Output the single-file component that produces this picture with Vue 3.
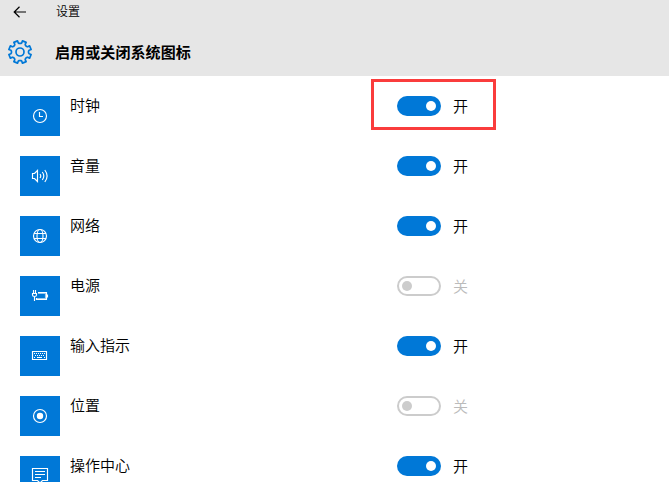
<script setup>
const rows = [
  { id: 'clock', label: '时钟', on: true, marked: true },
  { id: 'volume', label: '音量', on: true },
  { id: 'network', label: '网络', on: true },
  { id: 'power', label: '电源', on: false },
  { id: 'input', label: '输入指示', on: true },
  { id: 'location', label: '位置', on: false },
  { id: 'action', label: '操作中心', on: true },
]

const gearPath = (() => {
  const pts = []
  for (let i = 0; i < 8; i++) {
    const base = i * 45 + 22.5
    for (const [da, r] of [[-17, 8.6], [-12, 9.2], [-10, 11.4], [10, 11.4], [12, 9.2], [17, 8.6]]) {
      const a = ((base + da) * Math.PI) / 180
      pts.push(`${(12 + r * Math.cos(a)).toFixed(2)} ${(12 + r * Math.sin(a)).toFixed(2)}`)
    }
  }
  return `M${pts.join('L')}Z`
})()
</script>

<template>
  <div class="page">
    <header class="header">
      <div class="titlebar">
        <svg class="back" width="14" height="12" viewBox="0 0 14 12"><path d="M13 6H1.5M6.5 .8L1.2 6l5.3 5.2" /></svg>
        <span>设置</span>
      </div>
      <div class="heading">
        <svg class="gear" width="24" height="24" viewBox="0 0 24 24">
          <path :d="gearPath" /><circle cx="12" cy="12" r="4" />
        </svg>
        <h1>启用或关闭系统图标</h1>
      </div>
    </header>
    <main class="list">
      <div v-for="row in rows" :key="row.id" class="row">
        <div class="tile">
          <svg class="glyph" width="20" height="20" viewBox="0 0 20 20">
            <template v-if="row.id === 'clock'">
              <circle cx="10" cy="10" r="6.5" /><path d="M9.5 6v4.5H13" />
            </template>
            <template v-else-if="row.id === 'volume'">
              <path d="M2.5 7.5h2L7.5 4.5v11L4.5 12.5h-2zM10 8q1.5 2 0 4M12.3 6q3 4 0 8M14.8 4q4.6 6 0 12" />
            </template>
            <template v-else-if="row.id === 'network'">
              <circle cx="10" cy="10" r="6.5" /><ellipse cx="10" cy="10" rx="3" ry="6.5" /><path d="M4 7.5h12M4 12.5h12" />
            </template>
            <template v-else-if="row.id === 'power'">
              <path d="M8 6.5h8.5v7H6.5v-1.5M17.5 8.5v3M3.5 4v3M5.5 4v3M2 7.5h5M2.5 7.5v1.5q0 1.5 2 1.5t2-1.5V7.5M4.5 11v4" /><path class="inner" d="M8 7.5h7.5v5H7" />
            </template>
            <template v-else-if="row.id === 'input'">
              <path d="M2.5 5.5h14v8h-14z" /><path class="keys" d="M4 7.5h11M5 9.5h10" /><path d="M4 11.5h1M7 11.5h5M14 11.5h1" />
            </template>
            <template v-else-if="row.id === 'location'">
              <circle cx="10" cy="10" r="6.5" /><circle class="solid" cx="10" cy="10" r="3.2" />
            </template>
            <template v-else>
              <path d="M2.5 2.5h15v12h-5L10 17l-2.5-2.5h-5zM5 5.5h10M5 8.5h10M5 11.5h6" />
            </template>
          </svg>
        </div>
        <div class="label">{{ row.label }}</div>
        <div class="control" :class="{ off: !row.on }">
          <span class="toggle"><span class="knob"></span></span>
          <span class="state">{{ row.on ? '开' : '关' }}</span>
          <span v-if="row.marked" class="mark"></span>
        </div>
      </div>
    </main>
  </div>
</template>

<style>
body { background: #fff; overflow: hidden; }
</style>

<style scoped>
.page { width: 669px; height: 482px; overflow: hidden; background: #fff; color: #000; font-family: "Noto Sans CJK SC", sans-serif; font-weight: 350; }
.header { height: 76px; background: #e6e6e6; }
.titlebar { display: flex; align-items: center; height: 24px; padding-left: 13px; font-size: 12px; line-height: 22px; }
.titlebar span { margin-left: 29px; padding-bottom: 2px; }
svg { display: block; fill: none; }
.back { stroke: #000; stroke-width: 1.2; }
.heading { display: flex; align-items: center; height: 56px; padding-left: 8px; }
.gear { stroke: #0078d7; stroke-width: 1.7; stroke-linejoin: round; overflow: visible; }
h1 { margin: 0 0 0 23px; font-size: 15px; line-height: 24px; font-weight: 700; letter-spacing: .1px; }
.list { padding: 20px 0 0 20px; }
.row { display: flex; height: 60px; }
.tile { display: flex; align-items: center; justify-content: center; width: 40px; height: 40px; background: #0078d7; }
.glyph { stroke: #fff; stroke-width: 1.15; }
.solid { fill: #fff; stroke: none; }
.inner { stroke-opacity: .6; }
.keys { stroke-dasharray: 1 1; }
.label { width: 327px; padding-left: 10px; font-size: 15px; line-height: 18px; }
.control { position: relative; display: flex; align-items: center; height: 20px; }
.toggle { display: flex; align-items: center; justify-content: flex-end; box-sizing: border-box; width: 44px; height: 20px; padding: 0 5px; border-radius: 10px; background: #0078d7; }
.knob { width: 10px; height: 10px; border-radius: 50%; background: #fff; }
.state { margin-left: 12px; font-size: 15px; line-height: 20px; }
.off .toggle { justify-content: flex-start; padding: 0 3px; border: 2px solid #ccc; background: #fff; }
.off .knob { background: #ccc; }
.off .state { color: #bbb; }
.mark { position: absolute; left: -26px; top: -17px; box-sizing: border-box; width: 125px; height: 51px; border: 3px solid #fa3c3c; }
</style>
